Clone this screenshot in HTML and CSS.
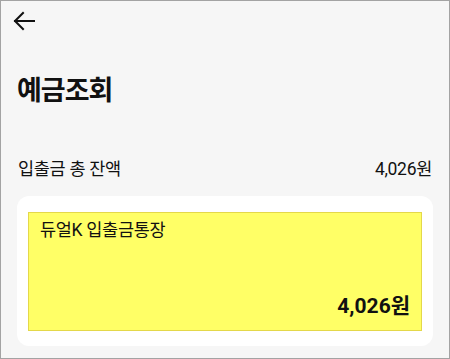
FILE: index.html
```html
<!DOCTYPE html>
<html lang="ko">
<head>
  <meta charset="UTF-8" />
  <meta name="viewport" content="width=device-width, initial-scale=1.0" />
  <title>예금조회</title>
  <link rel="stylesheet" href="styles.css">
</head>
<body>
  <div class="screen">
    <div class="top-bar">
      <button class="back-btn" aria-label="뒤로">
        <svg width="24" height="24" viewBox="0 0 24 24" fill="none" stroke="#111" stroke-width="2" stroke-linecap="square">
          <path d="M22 12H3" />
          <path d="M11 4L3 12L11 20" />
        </svg>
      </button>
    </div>
    <div class="title">예금조회</div>
    <div class="total-row">
      <span>입출금 총 잔액</span>
      <span>4,026원</span>
    </div>
    <div class="card">
      <div class="account">
        <div class="account-name">듀얼K 입출금통장</div>
        <div class="account-balance">4,026원</div>
      </div>
    </div>
  </div>
</body>
</html>
```

FILE: styles.css
```css
body {
  margin: 0;
  padding: 0;
  font-family: Roboto, "Noto Sans CJK KR", sans-serif;
  color: #111;
}
.screen {
  box-sizing: border-box;
  width: 450px;
  height: 359px;
  border: 1px solid #a3a3a3;
  background: #f6f6f6;
  padding: 0 16px;
  display: flex;
  flex-direction: column;
}
.top-bar {
  height: 38px;
  display: flex;
  align-items: center;
}
.back-btn {
  border: none;
  background: none;
  padding: 0;
  margin-left: -5px;
  margin-top: 1px;
  width: 24px;
  height: 24px;
  cursor: pointer;
}
.back-btn svg {
  display: block;
}
.title {
  margin-top: 32px;
  font-size: 27px;
  font-weight: bold;
  line-height: 40px;
  letter-spacing: -1px;
}
.total-row {
  margin-top: 46px;
  display: flex;
  justify-content: space-between;
  font-size: 17.5px;
  line-height: 24px;
  padding: 0 1px;
  letter-spacing: -0.3px;
}
.card {
  margin-top: 15px;
  background: #fff;
  border-radius: 12px;
  padding: 16px 11px 15px;
}
.account {
  background: #ffff66;
  border: 1px solid #e4d84a;
  height: 112px;
  padding: 5px 11px 0;
  display: flex;
  flex-direction: column;
  justify-content: space-between;
}
.account-name {
  font-size: 17.5px;
  line-height: 24px;
  letter-spacing: -0.3px;
}
.account-balance {
  align-self: flex-end;
  font-size: 21px;
  font-weight: bold;
  line-height: 30px;
  margin-bottom: 9px;
}
```
